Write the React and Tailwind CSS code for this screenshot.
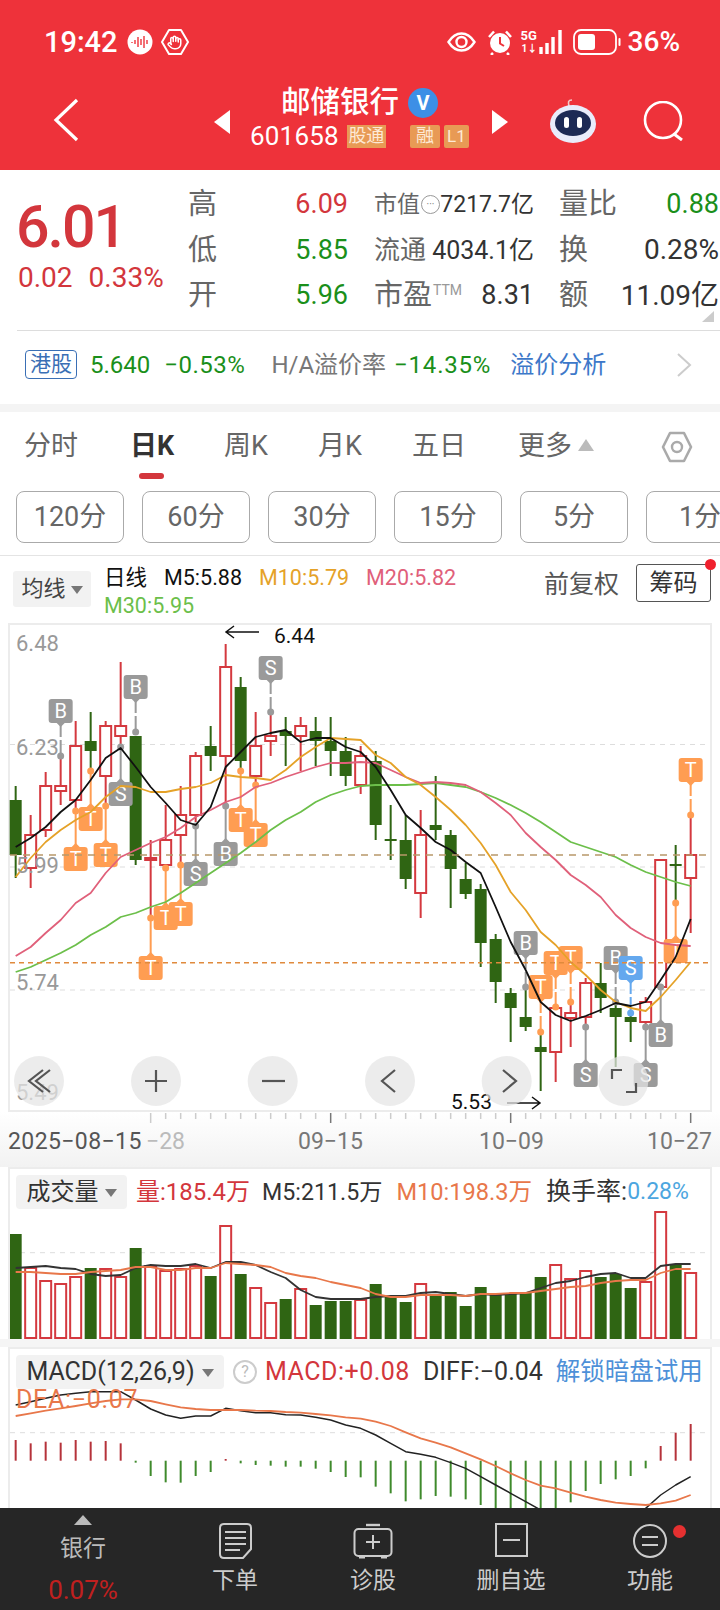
import { Hand } from 'lucide-react';

const FONT = "font-['Roboto','Noto_Sans_CJK_SC',sans-serif]";
const RED = '#d4393f';
const GREEN = '#2f6513';
const cx = (i) => 15.67 + 15 * i;

// [wick top, body top, body bottom, wick bottom, red?]
const candles = [
  [786, 800, 855, 878, 0], [815, 835, 868, 888, 1], [772, 786, 830, 837, 1], [753, 786, 791, 805, 1],
  [721, 746, 800, 808, 1], [712, 741, 751, 770, 0], [721, 726, 776, 805, 1], [662, 726, 736, 747, 1],
  [736, 736, 860, 865, 0], [840, 858, 860, 918, 1], [805, 840, 865, 868, 1], [786, 815, 835, 865, 1],
  [752, 756, 815, 822, 1], [726, 746, 756, 771, 0], [644, 667, 756, 805, 1], [677, 687, 761, 770, 0],
  [712, 746, 776, 783, 1], [712, 736, 741, 756, 1], [717, 731, 736, 766, 0], [717, 726, 736, 771, 1],
  [717, 731, 741, 766, 0], [717, 741, 751, 776, 0], [737, 751, 776, 786, 0], [746, 756, 785, 794, 1],
  [751, 761, 825, 840, 0], [805, 839, 841, 860, 0], [815, 840, 879, 889, 0], [810, 835, 893, 918, 1],
  [776, 825, 830, 840, 0], [830, 835, 869, 908, 0], [863, 879, 894, 899, 0], [884, 889, 943, 967, 0],
  [934, 939, 982, 1003, 0], [988, 993, 1008, 1042, 0], [987, 1017, 1027, 1031, 0], [1033, 1047, 1052, 1091, 0],
  [1007, 1008, 1052, 1082, 1], [1000, 1013, 1018, 1047, 1], [978, 983, 1017, 1027, 1], [963, 983, 998, 1013, 0],
  [1003, 1008, 1017, 1067, 0], [1013, 1017, 1022, 1042, 0], [997, 1002, 1022, 1027, 1], [860, 860, 987, 990, 1],
  [845, 864, 866, 903, 0], [817, 855, 878, 933, 1],
];

const m5 = [847, 838, 827, 812, 800, 780, 758, 748, 767, 787, 803, 820, 825, 807, 767, 752, 737, 733, 730, 742, 738, 738, 747, 752, 767, 790, 815, 828, 842, 850, 862, 873, 907, 942, 970, 1002, 1015, 1021, 1016, 1010, 1003, 1006, 1002, 980, 957, 919];
const m10 = [877, 858, 842, 830, 820, 812, 797, 786, 787, 792, 792, 789, 787, 783, 775, 777, 778, 780, 770, 757, 747, 738, 739, 740, 755, 763, 777, 785, 797, 810, 825, 843, 865, 892, 910, 932, 945, 962, 975, 990, 1002, 1008, 1011, 997, 980, 962];
const m20 = [956, 947, 933, 920, 903, 893, 873, 857, 850, 843, 837, 828, 817, 810, 802, 797, 787, 783, 777, 772, 767, 763, 763, 762, 763, 770, 777, 783, 782, 783, 785, 792, 803, 815, 833, 847, 860, 875, 885, 897, 915, 928, 937, 943, 945, 946];
const m30 = [972, 967, 960, 953, 945, 935, 927, 917, 913, 907, 902, 893, 883, 873, 863, 853, 842, 830, 820, 812, 802, 795, 790, 786, 785, 785, 785, 784, 783, 785, 787, 792, 798, 805, 813, 822, 832, 842, 847, 852, 857, 865, 872, 877, 882, 886];

// [candle, letter, kind, box top, dot y]
const markers = [
  [3, 'B', 'g', 699, 756], [8, 'B', 'g', 675, 732], [7, 'S', 'g', 782, 747], [5, 'T', 'o', 807, 771],
  [4, 'T', 'o', 847, 811], [6, 'T', 'o', 843, 806], [17, 'S', 'g', 656, 712], [12, 'S', 'g', 862, 826],
  [14, 'B', 'g', 842, 806], [15, 'T', 'o', 808, 771], [16, 'T', 'o', 823, 785], [9, 'T', 'o', 956, 918],
  [10, 'T', 'o', 906, 868], [11, 'T', 'o', 902, 865], [34, 'B', 'g', 931, 987], [35, 'T', 'o', 975, 1032],
  [36, 'T', 'o', 951, 1007], [37, 'T', 'o', 946, 1002], [38, 'S', 'g', 1063, 1027], [40, 'B', 'g', 946, 1002],
  [41, 'S', 'b', 956, 1013], [42, 'S', 'g', 1063, 1027], [43, 'B', 'g', 1023, 987], [44, 'T', 'o', 939, 903],
  [45, 'T', 'o', 758, 815],
];
const markerColor = { g: '#9a9a9a', o: '#ff9d52', b: '#64a8ee' };

const volTop = [1234, 1268, 1281, 1284, 1277, 1268, 1269, 1277, 1248, 1266, 1271, 1269, 1266, 1276, 1226, 1274, 1288, 1303, 1299, 1289, 1305, 1301, 1301, 1300, 1284, 1297, 1302, 1284, 1296, 1292, 1306, 1287, 1295, 1293, 1293, 1277, 1265, 1279, 1271, 1277, 1274, 1288, 1282, 1212, 1265, 1273];
const volM5 = [1268, 1267, 1266, 1268, 1269, 1274, 1276, 1275, 1268, 1265, 1266, 1266, 1264, 1268, 1262, 1262, 1265, 1272, 1278, 1290, 1297, 1299, 1299, 1299, 1297, 1296, 1296, 1293, 1292, 1294, 1296, 1294, 1295, 1294, 1293, 1288, 1283, 1281, 1277, 1274, 1273, 1278, 1278, 1266, 1264, 1264];
const volM10 = [1272, 1272, 1273, 1274, 1274, 1272, 1271, 1270, 1267, 1267, 1270, 1270, 1268, 1268, 1263, 1264, 1265, 1267, 1273, 1276, 1278, 1282, 1285, 1288, 1294, 1297, 1297, 1295, 1295, 1295, 1296, 1294, 1294, 1293, 1293, 1291, 1289, 1287, 1286, 1283, 1281, 1280, 1280, 1273, 1269, 1269];

// macd values read off at 3x, offset from y 1340
const my = (v) => 1340 + v / 3;
const macdBar = [300, 310, 305, 308, 300, 305, 303, 310, 368, 408, 427, 428, 408, 396, 357, 370, 375, 377, 380, 380, 386, 396, 411, 412, 440, 460, 484, 478, 468, 470, 478, 495, 520, 520, 520, 520, 520, 487, 453, 432, 418, 408, 385, 318, 278, 252];
const macdBlack = [195, 185, 175, 165, 160, 155, 155, 155, 180, 207, 225, 235, 228, 228, 205, 212, 218, 218, 224, 225, 232, 240, 255, 265, 285, 310, 335, 343, 352, 368, 385, 410, 435, 460, 485, 510, 530, 550, 560, 565, 560, 545, 505, 465, 435, 410];
const macdOrange = [228, 220, 212, 205, 198, 190, 183, 178, 178, 183, 193, 202, 207, 210, 210, 210, 212, 213, 216, 218, 222, 226, 232, 236, 245, 258, 277, 295, 308, 322, 340, 358, 378, 400, 420, 437, 445, 458, 470, 480, 488, 492, 495, 490, 482, 465];

const pts = (ys) => ys.map((y, i) => `${cx(i)},${y}`).join(' ');

function Line({ ys, color, w = 1.8 }) {
  return <polyline points={pts(ys)} fill="none" stroke={color} strokeWidth={w} strokeLinejoin="round" />;
}

function Candle({ c, i }) {
  const [wt, bt, bb, wb, red] = c;
  const x = cx(i);
  const color = red ? RED : GREEN;
  return (
    <g>
      <line x1={x} x2={x} y1={wt} y2={wb} stroke={color} strokeWidth="2" />
      {red ? (
        <rect x={x - 5.5} y={bt} width="11" height={Math.max(bb - bt, 1)} fill="#fff" stroke={color} strokeWidth="2" />
      ) : (
        <rect x={x - 6} y={bt} width="12" height={bb - bt} fill={color} />
      )}
    </g>
  );
}

function Marker({ m }) {
  const [i, letter, kind, top, dot] = m;
  const x = cx(i);
  const color = markerColor[kind];
  const above = top < dot;
  return (
    <g>
      <line x1={x} x2={x} y1={above ? top + 24 : dot} y2={above ? dot : top} stroke={color} strokeWidth="2" strokeDasharray={above ? '14 3' : undefined} />
      <circle cx={x} cy={dot} r="3.5" fill={color} />
      <rect x={x - 12} y={top} width="24" height="24" rx="3" fill={color} />
      <path d={above ? `M${x - 4} ${top + 24}L${x} ${top + 28}L${x + 4} ${top + 24}Z` : `M${x - 4} ${top}L${x} ${top - 4}L${x + 4} ${top}Z`} fill={color} />
      <text x={x} y={top + 19} textAnchor="middle" fontSize="20" fill="#fff" fontFamily="Roboto">{letter}</text>
    </g>
  );
}

function KChart() {
  const btn = [39, 156, 272.7, 390, 506.7, 623.3];
  return (
    <svg viewBox="10 625 700 485" width="700" height="485" className="block overflow-visible" fontFamily="Roboto">
      {[744.5, 867, 990].map((y) => (
        <line key={y} x1="10" x2="710" y1={y} y2={y} stroke="#ddd" strokeWidth="1" strokeDasharray="5 5" />
      ))}
      {candles.map((c, i) => <Candle key={i} c={c} i={i} />)}
      {markers.map((m, i) => <Marker key={i} m={m} />)}
      <Line ys={m30} color="#6cbf4a" />
      <Line ys={m20} color="#e0607a" />
      <Line ys={m10} color="#e5a228" />
      <Line ys={m5} color="#111" />
      <line x1="10" x2="710" y1="855" y2="855" stroke="#b8986a" strokeWidth="1.5" strokeDasharray="7 6" />
      <line x1="10" x2="710" y1="962.7" y2="962.7" stroke="#e08a3c" strokeWidth="1.5" strokeDasharray="5 4" />
      <g fontSize="22" fill="#999">
        <text x="16" y="650.5">6.48</text>
        <text x="16" y="755">6.23</text>
        <text x="16" y="873">5.99</text>
        <text x="16" y="990">5.74</text>
        <text x="16" y="1100">5.49</text>
      </g>
      <g stroke="#111" strokeWidth="1.5" fill="none">
        <path d="M226 632H259M234 626L226 632L234 638" />
        <path d="M507 1103H540M532 1097L540 1103L532 1109" />
      </g>
      <text x="274" y="643" fontSize="21" fill="#111">6.44</text>
      <text x="451" y="1109" fontSize="21" fill="#111">5.53</text>
      {btn.map((x) => <circle key={x} cx={x} cy="1081" r="25" fill="#e4e4e4" fillOpacity="0.72" />)}
      <g stroke="#555" strokeWidth="2.2" fill="none">
        <path d="M43 1070L29 1081L43 1092M50 1070L36 1081L50 1092" />
        <path d="M145 1081H167M156 1070V1092" />
        <path d="M262 1081H285" />
        <path d="M395 1070L382 1081L395 1092" />
        <path d="M503 1070L516 1081L503 1092" />
        <path d="M612 1079V1070H622M636 1083V1092H626" />
      </g>
    </svg>
  );
}

function DateAxis() {
  const ticks = Array.from({ length: 37 }, (_, k) => 9 + k);
  const major = [21, 33, 45];
  return (
    <div className="h-[55px] bg-linear-to-b from-white to-[#f2f2f2]">
      <svg viewBox="0 1112 720 55" width="720" height="55" className="block" fontFamily="Roboto">
        {ticks.map((i) => (
          <line key={i} x1={cx(i)} x2={cx(i)} y1="1113" y2={major.includes(i) ? 1123 : i === 9 ? 1123 : 1119} stroke={major.includes(i) ? '#777' : '#ccc'} strokeWidth="1.5" />
        ))}
        <g fontSize="23">
          <text x="8" y="1149" fill="#555" letterSpacing="0.4">2025−08−15</text>
          <text x="146" y="1149" fill="#bbb">−28</text>
          <text x="298" y="1149" fill="#777">09−15</text>
          <text x="479" y="1149" fill="#777">10−09</text>
          <text x="647" y="1149" fill="#777">10−27</text>
        </g>
      </svg>
    </div>
  );
}

function VolumeChart() {
  return (
    <svg viewBox="10 1211 700 128" width="700" height="128" className="block">
      <line x1="10" x2="710" y1="1252.7" y2="1252.7" stroke="#ddd" strokeDasharray="5 5" />
      {volTop.map((top, i) =>
        candles[i][4] ? (
          <rect key={i} x={cx(i) - 5.5} y={top} width="11" height={1338 - top} fill="#fff" stroke={RED} strokeWidth="2" />
        ) : (
          <rect key={i} x={cx(i) - 6} y={top} width="12" height={1339 - top} fill={GREEN} />
        ),
      )}
      <Line ys={volM5} color="#333" />
      <Line ys={volM10} color="#e8774a" />
    </svg>
  );
}

function MacdChart() {
  return (
    <svg viewBox="10 1349 700 159" width="700" height="159" className="absolute top-0 left-0">
      <line x1="10" x2="710" y1="1432.7" y2="1432.7" stroke="#ddd" strokeDasharray="5 5" />
      {macdBar.map((v, i) => (
        <line key={i} x1={cx(i)} x2={cx(i)} y1="1460.7" y2={my(v)} stroke={v < 362 ? '#b5323a' : '#3f8a2c'} strokeWidth="2" />
      ))}
      <Line ys={macdBlack.map(my)} color="#222" w={1.5} />
      <Line ys={macdOrange.map(my)} color="#e8774a" />
    </svg>
  );
}

function StatusBar() {
  return (
    <div className="flex h-[84px] items-center pl-[44px] pr-[40px] text-white">
      <span className="text-[29px] font-medium leading-none">19:42</span>
      <svg width="26" height="26" viewBox="0 0 26 26" className="ml-[9px]">
        <circle cx="13" cy="13" r="12.5" fill="#fff" />
        <path d="M5 13v1M8 11v4M11 8v10M14 10v6M17 7v12M20 11v4" stroke="#ee323a" strokeWidth="1.4" />
      </svg>
      <div className="relative ml-[8px] h-[28px] w-[28px]">
        <svg width="28" height="28" viewBox="0 0 28 28">
          <path d="M8 2H20L27 14L20 26H8L1 14Z" fill="none" stroke="#fff" strokeWidth="2" strokeLinejoin="round" />
        </svg>
        <Hand size={15} strokeWidth={2.4} className="absolute left-[6.5px] top-[6.5px]" />
      </div>
      <div className="flex-1" />
      <svg width="29" height="20" viewBox="0 0 29 20">
        <path d="M1.5 10C6 3 10 1.5 14.5 1.5S23 3 27.5 10C23 17 19 18.5 14.5 18.5S6 17 1.5 10Z" fill="none" stroke="#fff" strokeWidth="2.4" />
        <circle cx="14.5" cy="10" r="5" fill="none" stroke="#fff" strokeWidth="2.4" />
      </svg>
      <svg width="26" height="26" viewBox="0 0 26 26" className="ml-[11px]">
        <circle cx="13" cy="14" r="10" fill="#fff" />
        <path d="M13 8V14.5L17 17" stroke="#ee323a" strokeWidth="2" fill="none" />
        <path d="M2 8L7 2.5M24 8L19 2.5M6 24L4 26M20 24L22 26" stroke="#fff" strokeWidth="2.5" />
      </svg>
      <div className="relative ml-[8px] h-[27px] w-[17px]">
        <span className="absolute left-0 top-0 text-[13px] font-bold leading-[14px]">5G</span>
        <span className="absolute left-[1px] top-[15px] text-[10px] font-bold leading-[10px]">1↓</span>
      </div>
      <svg width="24" height="26" viewBox="0 0 24 26" className="ml-[1px]">
        <path d="M2 18V25M8 14V25M14 8V25M21 1V25" stroke="#fff" strokeWidth="3.4" />
      </svg>
      <svg width="48" height="26" viewBox="0 0 48 26" className="ml-[10px]">
        <rect x="1" y="1" width="42" height="24" rx="7" fill="none" stroke="#fff" strokeWidth="1.8" />
        <rect x="5" y="5" width="17" height="16" rx="3" fill="#fff" />
        <rect x="45.5" y="9" width="2" height="8" rx="1" fill="#fff" />
      </svg>
      <span className="ml-[7px] text-[28px] font-medium leading-none">36%</span>
    </div>
  );
}

function TitleBar() {
  return (
    <div className="flex h-[86px] items-start text-white">
      <svg width="26" height="44" viewBox="0 0 26 44" className="ml-[53px] mt-[14px]">
        <path d="M24 2L3 22L24 42" fill="none" stroke="#fff" strokeWidth="3.2" />
      </svg>
      <svg width="17" height="24" viewBox="0 0 17 24" className="ml-[135px] mt-[26px]">
        <path d="M16 0V24L0 12Z" fill="#fff" />
      </svg>
      <div className="ml-[21px] w-[239px]">
        <div className="flex h-[38px] items-center pl-[29px]">
          <span className="text-[29.5px] font-medium leading-none">邮储银行</span>
          <span className="ml-[9px] flex h-[30px] w-[30px] items-center justify-center rounded-full bg-[#3d8fe6] text-[20px] font-bold leading-none">V</span>
        </div>
        <div className="-ml-[2px] mt-[2px] flex h-[24px] items-center">
          <span className="text-[26px] leading-none tracking-[0.2px]">601658</span>
          <span className="ml-[8px] flex h-[23px] w-[39px] items-center justify-center bg-[#e89a55] text-[18px] leading-none text-[#fde9d6]">股通</span>
          <span className="ml-[24px] flex h-[23px] w-[30px] items-center justify-center rounded-[2px] bg-[#e89a55] text-[18px] leading-none text-[#fde9d6]">融</span>
          <span className="ml-[4px] flex h-[23px] w-[25px] items-center justify-center rounded-[2px] bg-[#e89a55] text-[17px] leading-none text-[#fde9d6]">L1</span>
        </div>
      </div>
      <svg width="17" height="24" viewBox="0 0 17 24" className="mt-[26px]">
        <path d="M1 0V24L17 12Z" fill="#fff" />
      </svg>
      <svg width="48" height="46" viewBox="0 0 48 46" className="ml-[41px] mt-[13px]">
        <path d="M20 9C19 5 19 3 23 3" fill="none" stroke="#f3c9c9" strokeWidth="1.6" />
        <ellipse cx="24" cy="27" rx="23" ry="19" fill="#e9ecfb" />
        <ellipse cx="24" cy="26" rx="18" ry="13" fill="#1d2a55" />
        <rect x="15" y="20" width="5" height="11" rx="2.5" fill="#fff" />
        <rect x="28" y="20" width="5" height="11" rx="2.5" fill="#fff" />
      </svg>
      <svg width="42" height="40" viewBox="0 0 42 40" className="ml-[46px] mt-[17px]">
        <circle cx="20" cy="19" r="18" fill="none" stroke="#fff" strokeWidth="2.6" />
        <path d="M31 33L39 39" stroke="#fff" strokeWidth="3" />
      </svg>
    </div>
  );
}

function Stat({ label, value, valueClass, labelClass = 'text-[29px]', extra }) {
  return (
    <div className="flex h-[45.5px] items-center justify-between whitespace-nowrap">
      <div className="flex items-center">
        <span className={`${labelClass} leading-none text-[#666]`}>{label}</span>
        {extra}
      </div>
      <span className={`${valueClass} leading-none`}>{value}</span>
    </div>
  );
}

function Quote() {
  return (
    <div className="relative flex h-[160px] pl-[18px] pt-[12px]">
      <div className="w-[170px]">
        <div className="-ml-[2px] mt-[11px] text-[59px] font-medium leading-[68px] tracking-[-2px] text-[#d3363c]">6.01</div>
        <div className="mt-[1px] flex text-[28px] leading-[32px] text-[#d3363c]">
          <span>0.02</span>
          <span className="ml-[16px]">0.33%</span>
        </div>
      </div>
      <div className="w-[160px]">
        <Stat label="高" value="6.09" valueClass="text-[27px] text-[#d3363c]" />
        <Stat label="低" value="5.85" valueClass="text-[27px] text-[#1a8f1a]" />
        <Stat label="开" value="5.96" valueClass="text-[27px] text-[#1a8f1a]" />
      </div>
      <div className="ml-[26px] w-[160px]">
        <Stat
          label="市值"
          labelClass="text-[23px]"
          value="7217.7亿"
          valueClass="text-[23px] text-[#333]"
          extra={
            <span className="ml-[1px] flex h-[19px] w-[19px] items-center justify-center rounded-full border border-[#999] text-[10px] leading-none text-[#777]">···</span>
          }
        />
        <Stat label="流通" labelClass="text-[26px]" value="4034.1亿" valueClass="text-[25px] text-[#333]" />
        <Stat
          label="市盈"
          labelClass="text-[29px]"
          value="8.31"
          valueClass="text-[27px] text-[#333]"
          extra={<span className="mb-[12px] ml-[1px] text-[14px] leading-none text-[#999]">TTM</span>}
        />
      </div>
      <div className="ml-[25px] w-[160px]">
        <Stat label="量比" value="0.88" valueClass="text-[27px] text-[#1a8f1a]" />
        <Stat label="换" value="0.28%" valueClass="text-[28px] text-[#333]" />
        <Stat label="额" value="11.09亿" valueClass="text-[28px] text-[#333]" />
      </div>
      <div className="absolute bottom-[8px] right-[6px] h-0 w-0 border-b-[11px] border-l-[12px] border-b-[#ccc] border-l-transparent" />
    </div>
  );
}

function HkRow() {
  return (
    <div className="flex h-[73px] items-center whitespace-nowrap pb-[6px] pl-[25px] text-[24px] leading-none">
      <span className="flex h-[29px] w-[52px] items-center justify-center rounded-[4px] border border-[#3a6fb5] text-[21px] text-[#3a6fb5]">港股</span>
      <span className="ml-[13px] text-[#1a8f1a]">5.640</span>
      <span className="ml-[14px] tracking-[0.5px] text-[#1a8f1a]">−0.53%</span>
      <span className="ml-[26px] text-[#777]">H/A溢价率</span>
      <span className="ml-[8px] tracking-[0.8px] text-[#1a8f1a]">−14.35%</span>
      <span className="ml-[19px] text-[#3d78c9]">溢价分析</span>
      <svg width="16" height="24" viewBox="0 0 16 24" className="ml-[70px]">
        <path d="M2 1L14 12L2 23" fill="none" stroke="#ccc" strokeWidth="2" />
      </svg>
    </div>
  );
}

function Tabs() {
  const tabs = [
    ['分时', 'w-[106px]', 'text-[#666]'],
    ['日K', 'w-[94px]', 'font-bold text-[#333]'],
    ['周K', 'w-[94px]', 'text-[#666]'],
    ['月K', 'w-[94px]', 'text-[#666]'],
    ['五日', 'w-[106px]', 'text-[#666]'],
  ];
  return (
    <div className="flex h-[79px] whitespace-nowrap pl-[24px] pt-[19px] text-[27px] leading-[30px]">
      {tabs.map(([t, w, c]) => (
        <div key={t} className={w}>
          <div className={c}>{t}</div>
          {t === '日K' && <div className="ml-[9px] mt-[12px] h-[6px] w-[25px] rounded-full bg-[#d3363c]" />}
        </div>
      ))}
      <span className="text-[#666]">更多</span>
      <span className="ml-[6px] mt-[8px] h-0 w-0 border-b-[12px] border-l-[8px] border-r-[8px] border-b-[#bbb] border-l-transparent border-r-transparent" />
      <svg width="32" height="32" viewBox="0 0 32 32" className="ml-[67px]">
        <path d="M9 2H23L30 16L23 30H9L2 16Z" fill="none" stroke="#aaa" strokeWidth="2.6" strokeLinejoin="round" />
        <circle cx="16" cy="16" r="5" fill="none" stroke="#aaa" strokeWidth="2.4" />
      </svg>
    </div>
  );
}

function Periods() {
  const items = ['120分', '60分', '30分', '15分', '5分', '1分'];
  return (
    <div className="flex gap-[18px] overflow-hidden pl-[16px]">
      {items.map((t) => (
        <div key={t} className="flex h-[52px] w-[108px] shrink-0 items-center justify-center rounded-[8px] border border-[#aaa] text-[27px] leading-none text-[#666]">
          {t}
        </div>
      ))}
    </div>
  );
}

function ChartHeader() {
  return (
    <div className="flex h-[67px] whitespace-nowrap">
      <div className="ml-[13px] mt-[15px] flex h-[36px] w-[78px] items-center justify-center rounded-[3px] bg-[#f2f2f2] text-[22px] leading-none text-[#444]">
        均线
        <span className="ml-[5px] mt-[2px] h-0 w-0 border-l-[6px] border-r-[6px] border-t-[8px] border-l-transparent border-r-transparent border-t-[#777]" />
      </div>
      <div className="ml-[13px] pt-[8px] text-[21.5px] leading-[28px]">
        <div className="flex">
          <span className="text-[#111]">日线</span>
          <span className="ml-[17px] text-[#111]">M5:5.88</span>
          <span className="ml-[17px] text-[#e5a228]">M10:5.79</span>
          <span className="ml-[17px] text-[#e0607a]">M20:5.82</span>
        </div>
        <div className="text-[#6cbf4a]">M30:5.95</div>
      </div>
      <div className="flex-1" />
      <span className="mt-[14px] text-[25px] leading-[30px] text-[#555]">前复权</span>
      <div className="relative ml-[17px] mr-[9px] mt-[8px] flex h-[38px] w-[75px] items-center justify-center rounded-[3px] border border-[#555] text-[24px] leading-none text-[#333]">
        筹码
        <span className="absolute -right-[6px] -top-[6px] h-[11px] w-[11px] rounded-full bg-[#f0202d]" />
      </div>
    </div>
  );
}

function VolumeHeader() {
  return (
    <div className="flex h-[42px] items-start whitespace-nowrap pl-[6px] pt-[6px] text-[24px] leading-[34px]">
      <div className="flex h-[34px] w-[111px] items-center justify-center rounded-[4px] bg-[#f2f2f2] text-[#333]">
        成交量
        <span className="ml-[6px] mt-[2px] h-0 w-0 border-l-[6px] border-r-[6px] border-t-[8px] border-l-transparent border-r-transparent border-t-[#777]" />
      </div>
      <span className="ml-[9px] text-[#d3363c]">量:185.4万</span>
      <span className="ml-[12px] text-[23.2px] text-[#333]">M5:211.5万</span>
      <span className="ml-[14px] text-[23.6px] text-[#e8774a]">M10:198.3万</span>
      <span className="ml-[14px] text-[25px] text-[#333]">换手率:</span>
      <span className="text-[23px] text-[#4ca6e0]">0.28%</span>
    </div>
  );
}

function MacdHeader() {
  return (
    <div className="relative whitespace-nowrap pl-[6px] pt-[6px] text-[25px] leading-[34px]">
      <div className="flex h-[34px] items-center">
        <div className="flex h-[34px] w-[208px] items-center justify-center rounded-[4px] bg-[#f2f2f2] text-[#333]">
          MACD(12,26,9)
          <span className="ml-[7px] mt-[2px] h-0 w-0 border-l-[6px] border-r-[6px] border-t-[8px] border-l-transparent border-r-transparent border-t-[#777]" />
        </div>
        <span className="ml-[9px] flex h-[24px] w-[24px] items-center justify-center rounded-full border-2 border-[#ccc] text-[16px] leading-none text-[#bbb]">?</span>
        <span className="ml-[8px] tracking-[0.5px] text-[#d3363c]">MACD:+0.08</span>
        <span className="ml-[13px] text-[#333]">DIFF:−0.04</span>
        <span className="ml-[13px] text-[24.5px] text-[#4d90d8]">解锁暗盘试用</span>
      </div>
      <div className="leading-[22px] tracking-[0.7px] text-[#e8774a]">DEA:−0.07</div>
    </div>
  );
}

function NavItem({ label, icon, className = 'w-[138px]' }) {
  return (
    <div className={`flex flex-col items-center ${className}`}>
      <div className="flex h-[54px] items-start pt-[15px]">{icon}</div>
      <span className="mt-[5px] text-[23px] leading-[28px] text-[#ccc]">{label}</span>
    </div>
  );
}

function BottomNav() {
  const s = { fill: 'none', stroke: '#ccc', strokeWidth: 2 };
  return (
    <div className="flex h-[102px] bg-[#262626]">
      <div className="flex w-[166px] flex-col items-center">
        <span className="mt-[7px] h-0 w-0 border-b-[10px] border-l-[9px] border-r-[9px] border-b-[#bbb] border-l-transparent border-r-transparent" />
        <span className="mt-[10px] text-[23px] leading-[28px] text-[#bbb]">银行</span>
        <span className="mt-[13px] text-[26px] leading-[28px] text-[#c0201f]">0.07%</span>
      </div>
      <NavItem
        label="下单"
        icon={
          <svg width="33" height="36" viewBox="0 0 33 36">
            <path d="M5 1H28Q32 1 32 5V26L24 35H5Q1 35 1 31V5Q1 1 5 1Z" {...s} />
            <path d="M6 9H27M6 15H27M6 21H27M6 27H21" {...s} />
          </svg>
        }
      />
      <NavItem
        label="诊股"
        icon={
          <svg width="40" height="36" viewBox="0 0 40 36">
            <path d="M13 2H27" {...s} strokeWidth="2.4" />
            <rect x="1.5" y="6" width="37" height="27" rx="4" {...s} />
            <path d="M13 19H27M20 12V26" {...s} />
            <path d="M6 34.5H12M28 34.5H34" {...s} />
          </svg>
        }
      />
      <NavItem
        label="删自选"
        icon={
          <svg width="33" height="34" viewBox="0 0 33 34">
            <rect x="1" y="1" width="31" height="32" {...s} />
            <path d="M8 17H25" {...s} />
          </svg>
        }
      />
      <div className="relative flex w-[140px] flex-col items-center">
        <div className="flex h-[54px] items-start pt-[16px]">
          <svg width="34" height="34" viewBox="0 0 34 34">
            <circle cx="17" cy="17" r="16" {...s} />
            <path d="M9 13H25M9 21H25" {...s} />
          </svg>
        </div>
        <span className="mt-[5px] text-[23px] leading-[28px] text-[#ccc]">功能</span>
        <span className="absolute left-[93px] top-[17px] h-[13px] w-[13px] rounded-full bg-[#e53030]" />
      </div>
    </div>
  );
}

export default function App() {
  return (
    <div className={`flex h-[1610px] w-[720px] flex-col overflow-hidden bg-white ${FONT}`}>
      <header className="h-[170px] bg-[#ee323a]">
        <StatusBar />
        <TitleBar />
      </header>
      <Quote />
      <div className="ml-[17px] h-px bg-[#ddd]" />
      <HkRow />
      <div className="h-[8px] bg-[#f4f4f4]" />
      <Tabs />
      <Periods />
      <div className="mt-[12px] h-px bg-[#e4e4e4]" />
      <ChartHeader />
      <div className="ml-[8px] h-[489px] w-[704px] border-2 border-[#ececec]">
        <KChart />
      </div>
      <DateAxis />
      <div className="ml-[8px] h-[172px] w-[704px] overflow-hidden border-x-2 border-t-2 border-[#ececec]">
        <VolumeHeader />
        <VolumeChart />
      </div>
      <div className="h-[8px] bg-[#f5f5f5]" />
      <div className="relative ml-[8px] h-[161px] w-[704px] overflow-hidden border-x-2 border-t-2 border-[#ececec]">
        <MacdChart />
        <MacdHeader />
      </div>
      <BottomNav />
    </div>
  );
}
